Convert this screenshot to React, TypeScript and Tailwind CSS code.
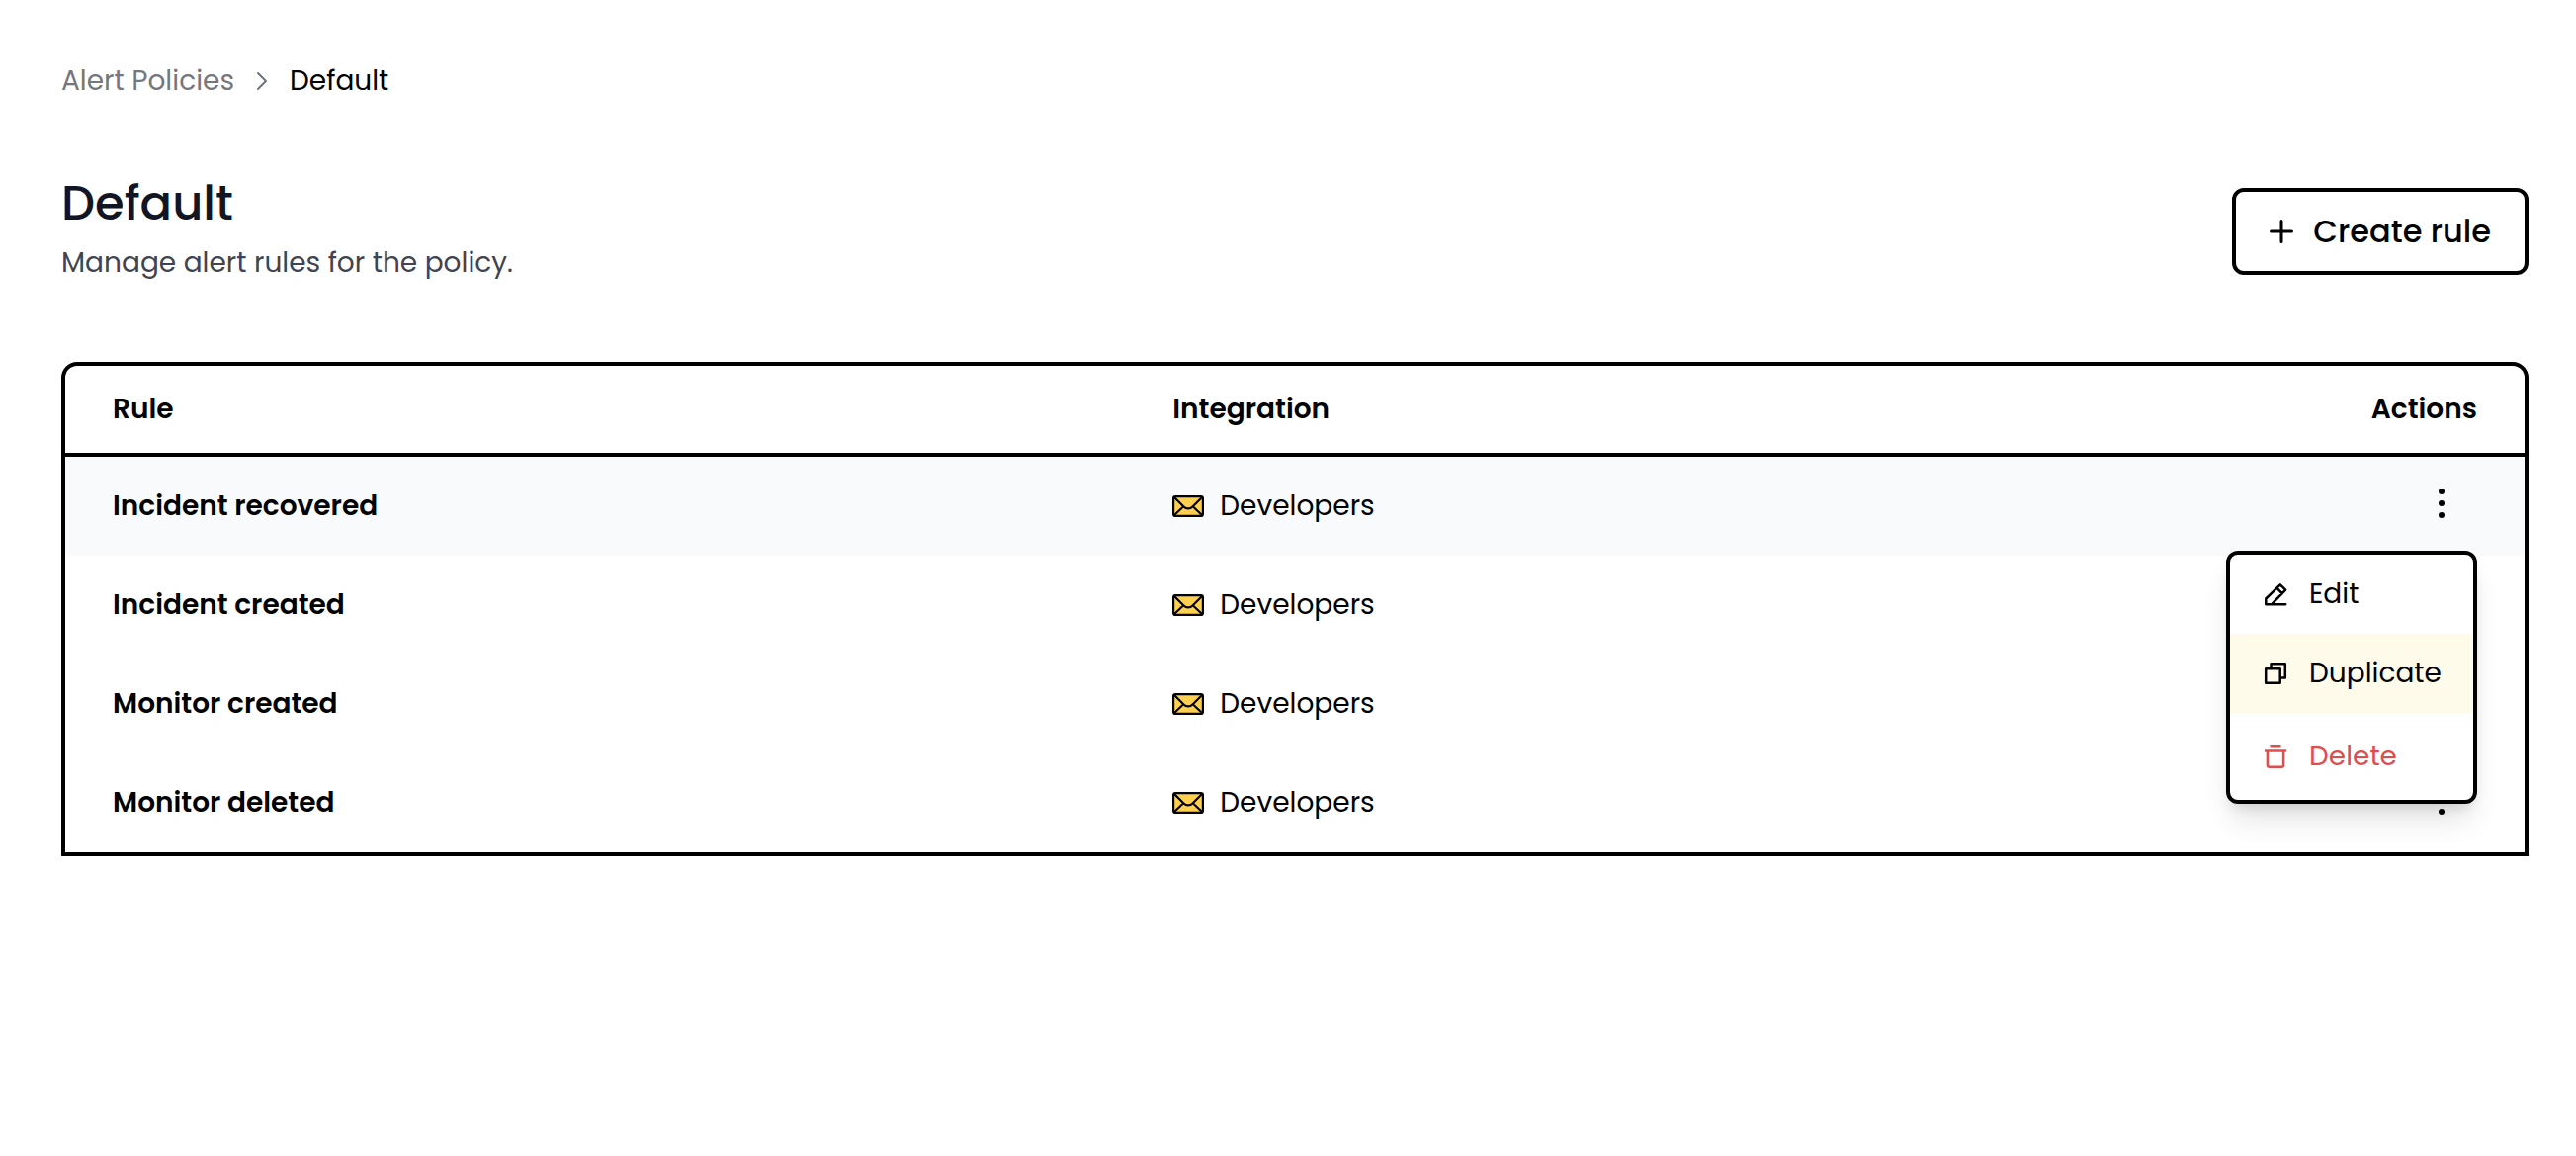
import React from "react";

type Rule = { name: string; integration: string; menuOpen?: boolean };

const rules: Rule[] = [
  { name: "Incident recovered", integration: "Developers", menuOpen: true },
  { name: "Incident created", integration: "Developers" },
  { name: "Monitor created", integration: "Developers" },
  { name: "Monitor deleted", integration: "Developers" },
];

function ChevronIcon() {
  return (
    <svg className="h-5 w-3 text-[#6f737b]" viewBox="0 0 12 20" fill="none" stroke="currentColor" strokeWidth="2" strokeLinecap="round" strokeLinejoin="round" aria-hidden="true">
      <path d="M2 2l8 8-8 8" />
    </svg>
  );
}

function PlusIcon() {
  return (
    <svg className="size-6" viewBox="0 0 24 24" fill="none" stroke="currentColor" strokeWidth="3" strokeLinecap="round" aria-hidden="true">
      <path d="M12 1.5v21M1.5 12h21" />
    </svg>
  );
}

function MailIcon() {
  return (
    <svg className="h-[22px] w-8" viewBox="0 0 32 22" fill="none" stroke="black" strokeWidth="2.2" strokeLinejoin="round" aria-hidden="true">
      <rect x="1.1" y="1.1" width="29.8" height="19.8" rx="2" fill="#ffd04f" />
      <path d="M2 2l9.5 9.5c2.6 2.6 6.4 2.6 9 0L30 2M2 20l8.5-8M30 20l-8.5-8" />
    </svg>
  );
}

function DotsIcon() {
  return (
    <svg className="h-[30px] w-1.5" viewBox="0 0 6 30" fill="currentColor" aria-hidden="true">
      <circle cx="3" cy="3" r="3" />
      <circle cx="3" cy="15" r="3" />
      <circle cx="3" cy="27" r="3" />
    </svg>
  );
}

function EditIcon() {
  return (
    <svg className="size-6 shrink-0" viewBox="0 0 24 24" fill="none" stroke="currentColor" strokeWidth="2.5" strokeLinecap="round" strokeLinejoin="round" aria-hidden="true">
      <path d="M2.3 22.2v-5.7L16.8 2.3l5.4 5.4L8.2 22.2zM13.4 5.8l5.2 5.2M8.2 22.2h14" />
    </svg>
  );
}

function DuplicateIcon() {
  return (
    <svg className="size-6 shrink-0" viewBox="0 0 24 24" fill="none" stroke="currentColor" strokeWidth="2.5" strokeLinejoin="round" aria-hidden="true">
      <path d="M2.2 7.3h14.5v14.5H2.2zM7.5 7V2.2h14.3v14.3H17" />
    </svg>
  );
}

function TrashIcon() {
  return (
    <svg className="size-6 shrink-0" viewBox="0 0 24 24" fill="none" stroke="currentColor" strokeWidth="2.5" strokeLinecap="round" strokeLinejoin="round" aria-hidden="true">
      <path d="M7.5 1.3h9M2 5.6h20M3.9 5.6v15.1a2 2 0 0 0 2 2h12.2a2 2 0 0 0 2-2V5.6" />
    </svg>
  );
}

function ActionsMenu() {
  const item = "flex h-20 w-full items-center gap-[22px] pl-[34px] pr-6 text-left";
  return (
    <div role="menu" className="absolute top-[95px] right-12 z-10 flex w-[254px] flex-col rounded-xl border-4 border-black bg-white pb-1 shadow-[0_20px_30px_-6px_rgba(0,0,0,0.12),0_8px_12px_-4px_rgba(0,0,0,0.1)]">
      <button role="menuitem" type="button" className={item}>
        <EditIcon />
        Edit
      </button>
      <button role="menuitem" type="button" className={`${item} bg-[#fffbeb]`}>
        <DuplicateIcon />
        Duplicate
      </button>
      <button role="menuitem" type="button" className={`${item} mt-1 text-[#e14c4c]`}>
        <TrashIcon />
        Delete
      </button>
    </div>
  );
}

export default function App() {
  return (
    <main className="min-h-screen bg-white pt-[62px] pr-12 pb-12 pl-[62px] font-[Poppins,Inter,sans-serif] text-[28px] leading-10 text-black">
      <nav aria-label="Breadcrumb" className="flex items-center gap-[22px]">
        <a href="#policies" className="text-[#75777e]">Alert Policies</a>
        <ChevronIcon />
        <span aria-current="page">Default</span>
      </nav>

      <header className="mt-[74px] flex items-center justify-between">
        <div>
          <h1 className="text-[48px] leading-[60px] font-medium text-[#121624]">Default</h1>
          <p className="mt-2.5 text-[#3f4450]">Manage alert rules for the policy.</p>
        </div>
        <button type="button" className="mt-1.5 flex h-22 items-center gap-5 rounded-xl border-4 border-black px-[34px] text-[32px] font-medium">
          <PlusIcon />
          Create rule
        </button>
      </header>

      <section className="mt-20 rounded-t-2xl border-4 border-black">
        <table className="w-full table-fixed border-separate border-spacing-0">
          <thead>
            <tr className="h-23 text-left">
              <th scope="col" className="w-[43.1%] border-b-4 border-black px-12 font-semibold">Rule</th>
              <th scope="col" className="border-b-4 border-black px-12 font-semibold">Integration</th>
              <th scope="col" className="w-1/5 border-b-4 border-black px-12 text-right font-semibold">Actions</th>
            </tr>
          </thead>
          <tbody>
            {rules.map((rule) => (
              <tr key={rule.name} className={rule.menuOpen ? "h-25 bg-gray-50" : "h-25"}>
                <th scope="row" className="px-12 text-left font-semibold">{rule.name}</th>
                <td className="px-12">
                  <div className="flex items-center gap-4">
                    <MailIcon />
                    {rule.integration}
                  </div>
                </td>
                <td className="relative px-12">
                  <button type="button" aria-label={`Actions for ${rule.name}`} className="ml-auto flex h-12 w-18 items-center justify-center pb-1.5">
                    <DotsIcon />
                  </button>
                  {rule.menuOpen && <ActionsMenu />}
                </td>
              </tr>
            ))}
          </tbody>
        </table>
      </section>
    </main>
  );
}
